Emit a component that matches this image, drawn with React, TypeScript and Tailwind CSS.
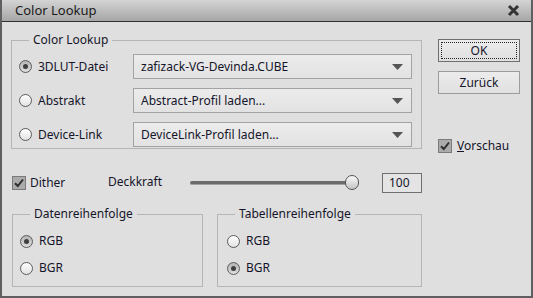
import React from "react";

const font = { fontFamily: '"Noto Sans", "Liberation Sans", sans-serif' };

function Radio({ checked = false }: { checked?: boolean }) {
  return (
    <div
      className={`w-[13px] h-[13px] rounded-full border border-[#5c5c5c] flex items-center justify-center shrink-0 ${
        checked ? "bg-gradient-to-b from-[#b4b4b4] to-[#dedede]" : "bg-gradient-to-b from-[#ffffff] to-[#e2e2e2]"
      }`}
    >
      {checked && <div className="w-[5px] h-[5px] rounded-full bg-[#3f3f3f]" />}
    </div>
  );
}

function Checkbox() {
  return (
    <div className="w-[14px] h-[14px] border border-[#7a7a7a] bg-[#ababab] flex items-center justify-center shrink-0">
      <svg width="12" height="12" viewBox="0 0 12 12">
        <path d="M2 6.2 L4.8 9 L10 2.5" fill="none" stroke="#2e2e2e" strokeWidth="2" />
      </svg>
    </div>
  );
}

function Select({ label }: { label: string }) {
  return (
    <div className="flex-1 h-[25px] border border-[#a3a3a3] bg-gradient-to-b from-[#ececec] to-[#e2e2e2] flex items-center justify-between pl-[7px] pr-[8px]">
      <span>{label}</span>
      <svg width="11" height="6" viewBox="0 0 11 6">
        <path d="M0 0 H11 L5.5 6 Z" fill="#555" />
      </svg>
    </div>
  );
}

function Group({ title, children, className }: { title: string; children: React.ReactNode; className: string }) {
  return (
    <div className={`relative border border-[#b5b5b5] ${className}`}>
      <span className="absolute -top-[10px] left-[17px] bg-[#dfdfdf] px-[4px] leading-[18px]">{title}</span>
      {children}
    </div>
  );
}

export default function App() {
  const rows = [
    { label: "3DLUT-Datei", value: "zafizack-VG-Devinda.CUBE", checked: true },
    { label: "Abstrakt", value: "Abstract-Profil laden...", checked: false },
    { label: "Device-Link", value: "DeviceLink-Profil laden...", checked: false },
  ];

  return (
    <div
      className="w-[533px] h-[298px] bg-[#dfdfdf] border-x-2 border-b-2 border-[#5f5f5f] flex flex-col text-[12px] text-[#15152a] overflow-hidden"
      style={font}
    >
      <div className="h-[22px] shrink-0 border-b border-[#2f2f2f] bg-gradient-to-b from-[#d4d4d4] to-[#a6a6a6] flex items-center justify-between pl-[13px] pr-[11px]">
        <span className="text-[13px] text-[#1a1a1a]">Color Lookup</span>
        <svg width="13" height="13" viewBox="0 0 13 13">
          <path d="M2 2 L11 11 M11 2 L2 11" stroke="#333" strokeWidth="3" />
        </svg>
      </div>

      <div className="flex items-start pl-[9px]">
        <div className="w-[411px] flex flex-col">
          <Group title="Color Lookup" className="mt-[18px] pt-[13px] pb-[1px] pl-[7px] pr-[9px]">
            <div className="flex flex-col gap-[9px]">
              {rows.map((r) => (
                <div key={r.label} className="h-[25px] flex items-center">
                  <div className="w-[114px] flex items-center gap-[6px]">
                    <Radio checked={r.checked} />
                    <span>{r.label}</span>
                  </div>
                  <Select label={r.value} />
                </div>
              ))}
            </div>
          </Group>

          <div className="mt-[24px] h-[20px] flex items-center pl-[1px]">
            <div className="w-[96px] flex items-center gap-[4px]">
              <Checkbox />
              <span>Dither</span>
            </div>
            <span className="w-[82px] -mt-[3px]">Deckkraft</span>
            <div className="relative w-[170px] h-[16px] flex items-center">
              <div className="w-[160px] h-[4px] rounded-full bg-[#6c6c6c] border-b border-[#a0a0a0]" />
              <div className="absolute right-[1px] top-0 w-[14px] h-[15px] rounded-full border border-[#555] bg-gradient-to-b from-[#fafafa] to-[#c4c4c4]" />
            </div>
            <div className="ml-auto w-[40px] h-[20px] border border-[#707070] bg-[#e4e4e4] flex items-center pl-[6px]">
              100
            </div>
          </div>

          <div className="mt-[21px] flex gap-[14px] pl-[1px]">
            <Group title="Datenreihenfolge" className="w-[191px] h-[73px] pt-[16px] pl-[7px]">
              <div className="flex flex-col gap-[7px]">
                <div className="h-[20px] flex items-center gap-[6px]">
                  <Radio checked />
                  <span>RGB</span>
                </div>
                <div className="h-[20px] flex items-center gap-[6px]">
                  <Radio />
                  <span>BGR</span>
                </div>
              </div>
            </Group>
            <Group title="Tabellenreihenfolge" className="w-[205px] h-[73px] pt-[16px] pl-[9px]">
              <div className="flex flex-col gap-[7px]">
                <div className="h-[20px] flex items-center gap-[6px]">
                  <Radio />
                  <span>RGB</span>
                </div>
                <div className="h-[20px] flex items-center gap-[6px]">
                  <Radio checked />
                  <span>BGR</span>
                </div>
              </div>
            </Group>
          </div>
        </div>

        <div className="ml-[16px] w-[82px] flex flex-col">
          <button className="mt-[17px] h-[23px] border border-[#6e6e6e] bg-gradient-to-b from-[#ececec] to-[#e0e0e0] p-[2px]">
            <div className="h-full border border-dotted border-[#222] flex items-center justify-center">OK</div>
          </button>
          <button className="mt-[9px] h-[23px] border border-[#9c9c9c] bg-gradient-to-b from-[#ececec] to-[#e0e0e0] flex items-center justify-center">
            Zurück
          </button>
          <div className="mt-[43px] flex items-center gap-[5px]">
            <Checkbox />
            <span>
              <span className="underline">V</span>orschau
            </span>
          </div>
        </div>
      </div>
    </div>
  );
}
